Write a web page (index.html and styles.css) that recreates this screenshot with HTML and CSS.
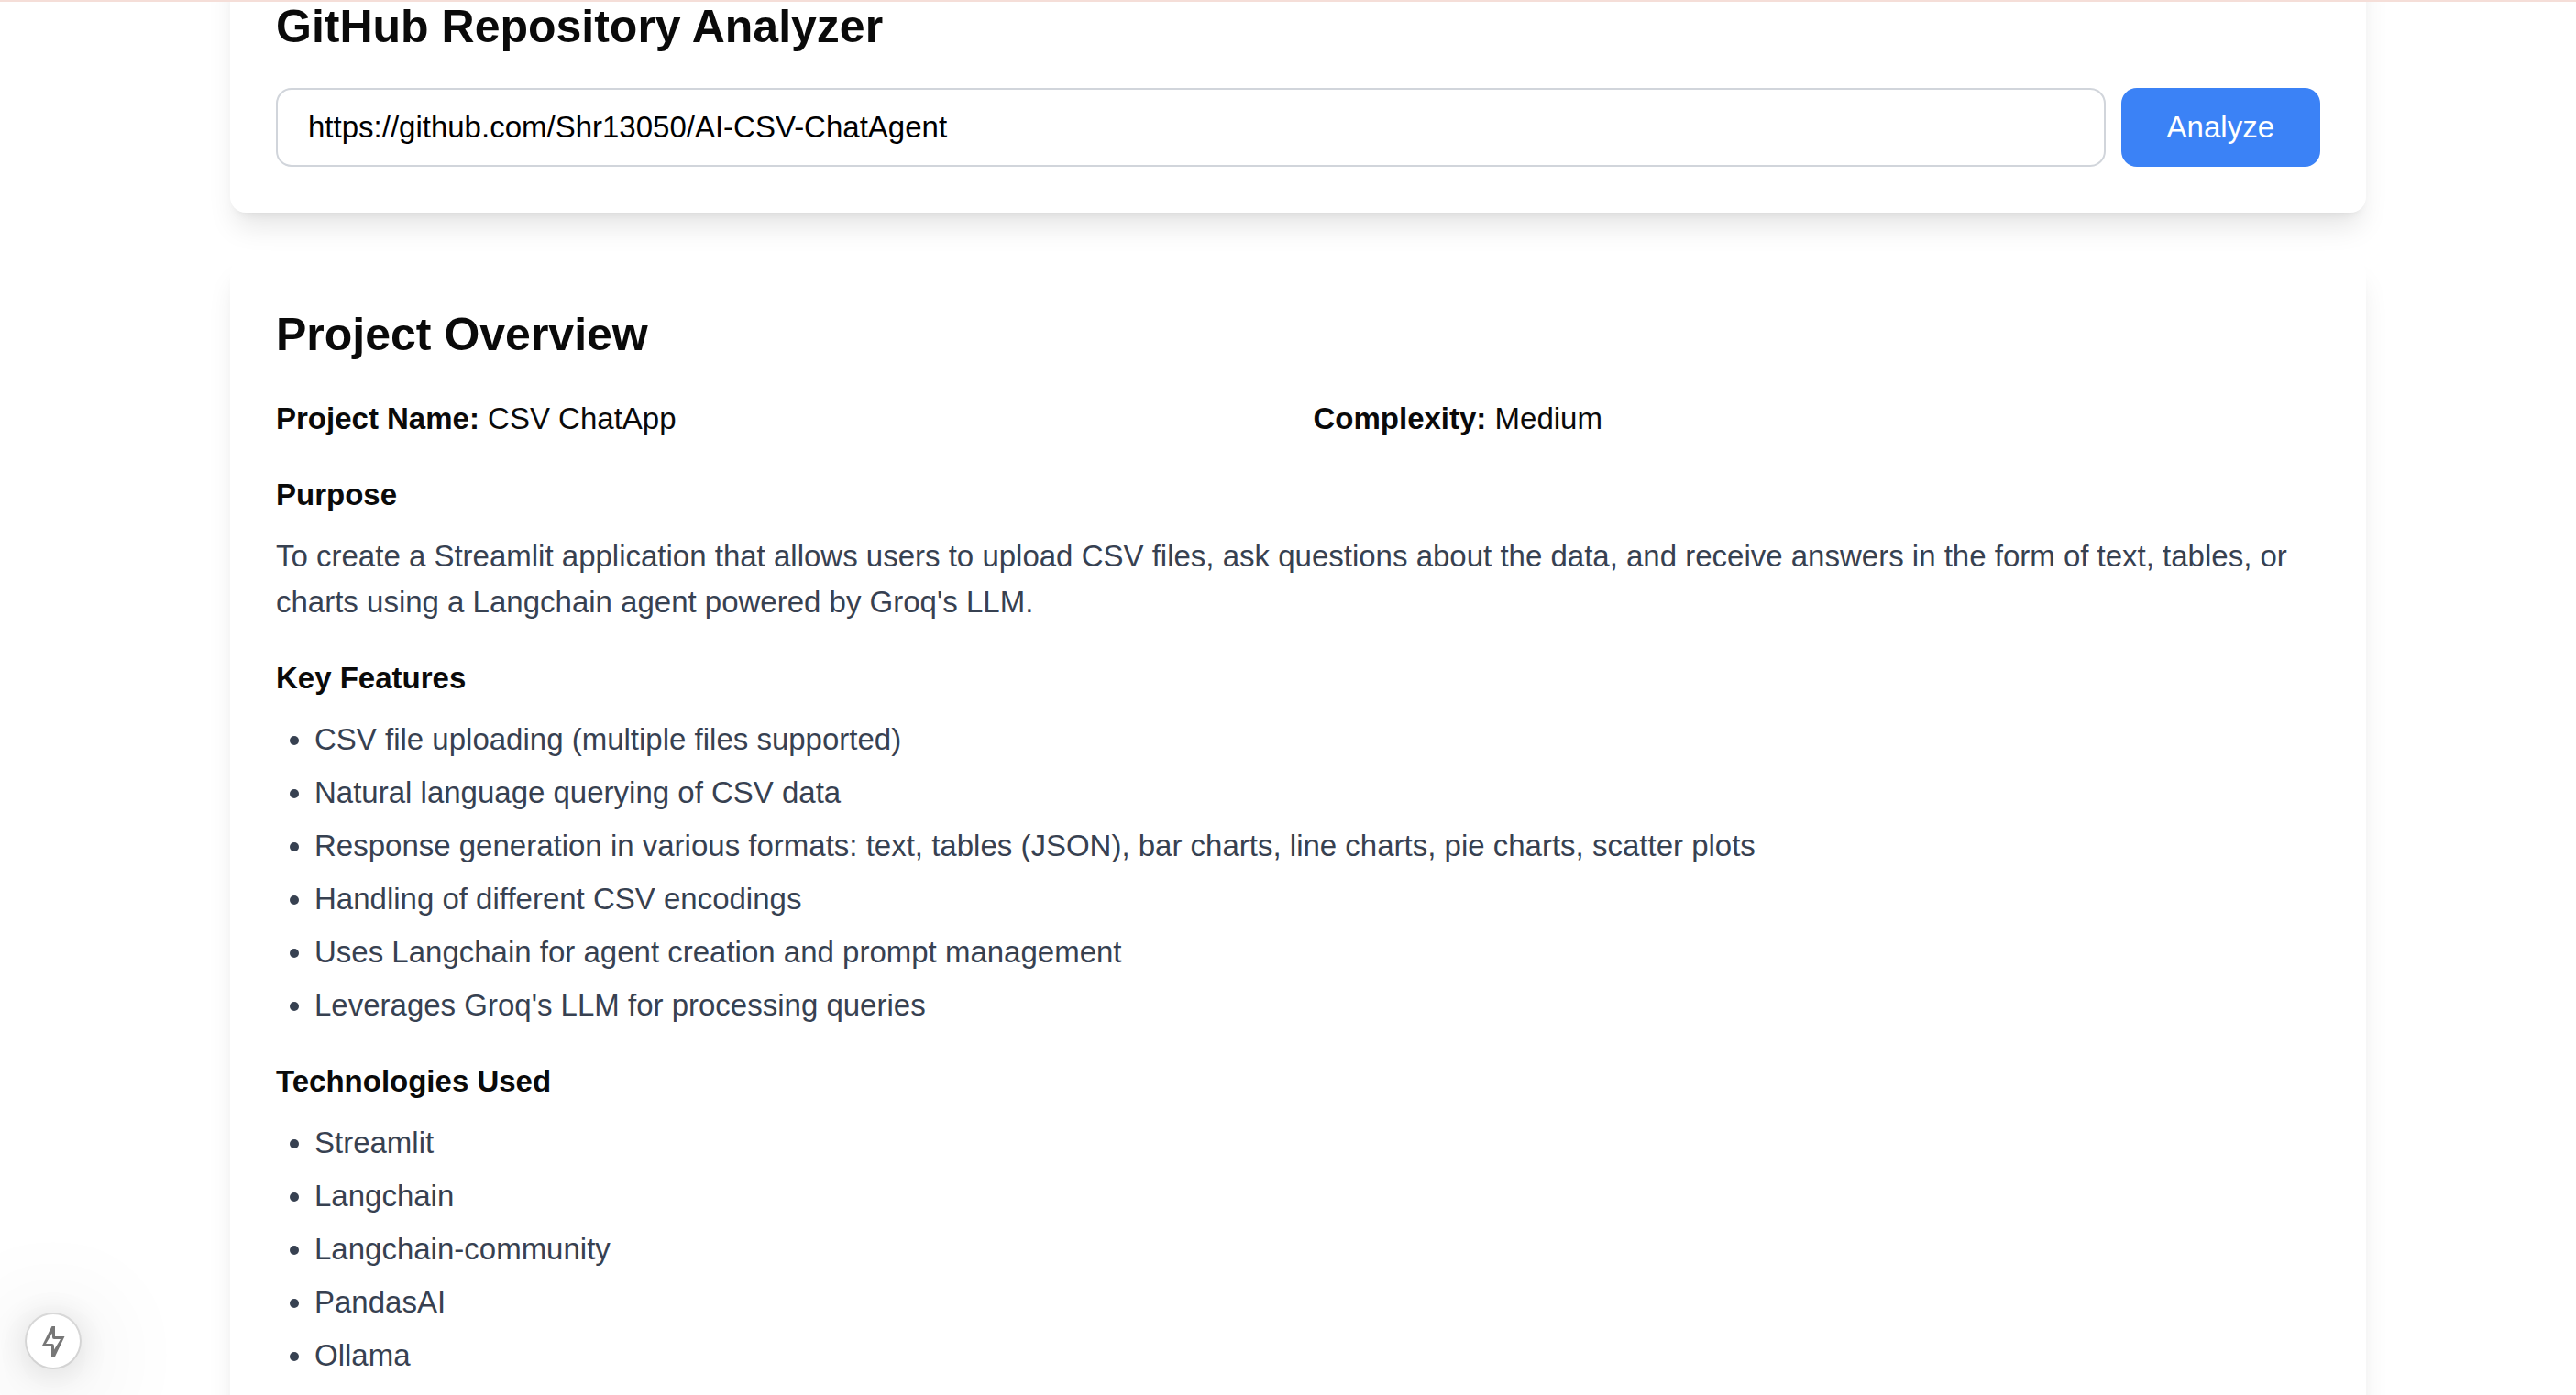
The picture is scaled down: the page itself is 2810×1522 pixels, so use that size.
FILE: index.html
```html
<!DOCTYPE html>
<html lang="en">
<head>
<meta charset="utf-8">
<meta name="viewport" content="width=device-width, initial-scale=1">
<title>GitHub Repository Analyzer</title>
<link rel="stylesheet" href="styles.css">
</head>
<body>
<div class="top-line"></div>
<main class="page">
  <section class="card">
    <h1 class="title" id="analyzer-title">GitHub Repository Analyzer</h1>
    <form class="repo-form">
      <input class="repo-input" type="text" aria-labelledby="analyzer-title" value="https://github.com/Shr13050/AI-CSV-ChatAgent">
      <button class="analyze" type="button">Analyze</button>
    </form>
  </section>
  <section class="card">
    <h2 class="title">Project Overview</h2>
    <div class="facts">
      <p><strong>Project Name:</strong> CSV ChatApp</p>
      <p><strong>Complexity:</strong> Medium</p>
    </div>
    <section class="block">
      <h3>Purpose</h3>
      <p class="muted">To create a Streamlit application that allows users to upload CSV files, ask questions about the data, and receive answers in the form of text, tables, or charts using a Langchain agent powered by Groq's LLM.</p>
    </section>
    <section class="block">
      <h3>Key Features</h3>
      <ul class="muted list">
        <li>CSV file uploading (multiple files supported)</li>
        <li>Natural language querying of CSV data</li>
        <li>Response generation in various formats: text, tables (JSON), bar charts, line charts, pie charts, scatter plots</li>
        <li>Handling of different CSV encodings</li>
        <li>Uses Langchain for agent creation and prompt management</li>
        <li>Leverages Groq's LLM for processing queries</li>
      </ul>
    </section>
    <section class="block">
      <h3>Technologies Used</h3>
      <ul class="muted list">
        <li>Streamlit</li>
        <li>Langchain</li>
        <li>Langchain-community</li>
        <li>PandasAI</li>
        <li>Ollama</li>
      </ul>
    </section>
  </section>
</main>
<button class="indicator" type="button" aria-label="Static route">
  <svg viewBox="0 0 58 58" width="58" height="58" fill="#777" aria-hidden="true"><path fill-rule="evenodd" d="M27.500 13H31V24H41.500L31 46H27V35H16.500ZM28 20.500 21 32H28Q30 32 30 34.500V38.500L37 27H30Q28 27 28 25Z"/></svg>
</button>
</body>
</html>
```
FILE: styles.css
```css
*, *::before, *::after { box-sizing: border-box; margin: 0; padding: 0; }

html { height: 100%; overflow: hidden; }

body {
  height: 100%;
  overflow: hidden;
  padding-left: 22px;
  background: #fff;
  color: #0a0a0a;
  font-family: "Liberation Sans", Arial, Helvetica, sans-serif;
  font-size: 33px;
  line-height: 50px;
}

.top-line {
  position: fixed;
  inset: 0 0 auto;
  z-index: 2;
  height: 2px;
  background: #f5ded8;
}

/* The page rests slightly scrolled, with the first card's top edge out of view. */
.page {
  display: flex;
  flex-direction: column;
  gap: 50px;
  width: 84%;
  max-width: 2330px;
  margin: -54px auto 0;
}

.card {
  padding: 50px;
  border-radius: 17px;
  background: #fff;
  box-shadow: 0 21px 31px -6px rgba(0, 0, 0, .1), 0 8px 12px -8px rgba(0, 0, 0, .1);
}

.title {
  margin-bottom: 33px;
  font-size: 50px;
  line-height: 67px;
}

.repo-form { display: flex; gap: 17px; }

.repo-input, .analyze {
  border-radius: 17px;
  font: inherit;
}

.repo-input {
  flex: 1;
  min-width: 0;
  padding: 16px 33px;
  border: 2px solid #d1d5db;
  background: #fff;
  color: #000;
}

.analyze {
  padding: 16px 50px;
  border: 0;
  background: #3b82f6;
  color: #fff;
}

.facts {
  display: grid;
  grid-template-columns: 1fr 1fr;
  gap: 33px;
}

.block { margin-top: 33px; }

.block h3 {
  margin-bottom: 17px;
  font-size: 33px;
}

.muted { color: #374151; }

.list {
  display: flex;
  flex-direction: column;
  gap: 8px;
  padding-left: 42px;
}

.indicator {
  position: fixed;
  bottom: 30px;
  left: 29px;
  width: 58px;
  height: 58px;
  border: 0;
  border-radius: 50%;
  background: #fff;
  box-shadow: 0 0 0 2px rgba(0, 0, 0, .1), 0 4px 40px rgba(0, 0, 0, .16), 0 16px 120px rgba(0, 0, 0, .24);
}

.indicator svg { display: block; }
```
